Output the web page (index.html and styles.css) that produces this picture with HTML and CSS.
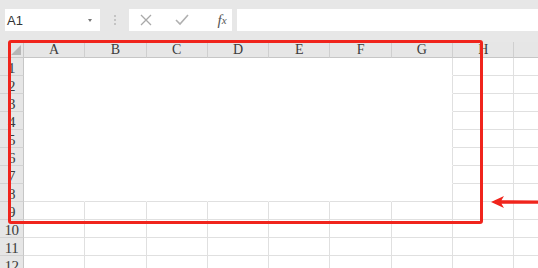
FILE: index.html
```html
<!DOCTYPE html>
<html lang="zh-CN">
<head>
  <meta charset="UTF-8" />
  <title>Sheet</title>
  <link rel="stylesheet" href="styles.css">
</head>
<body>
  <div class="toolbar">
    <div class="namebox">
      <span>A1</span>
      <span class="drop"></span>
    </div>
    <div class="sep"><i></i><i></i><i></i></div>
    <div class="fbtns">
      <span class="fbtn">
        <svg width="12" height="12" viewBox="0 0 12 12"><path d="M1 1L11 11M11 1L1 11" stroke="#a9a9a9" stroke-width="1.3" fill="none"/></svg>
      </span>
      <span class="fbtn">
        <svg width="14" height="12" viewBox="0 0 14 12"><path d="M1 6L5 10L13 1" stroke="#b0b0b0" stroke-width="1.6" fill="none"/></svg>
      </span>
      <span class="fbtn fx">f<sub>x</sub></span>
    </div>
    <div class="finput"></div>
  </div>

  <div class="sheet" id="sheet"></div>

  <div class="mark"></div>
  <svg class="arrow" width="48" height="14" viewBox="0 0 48 14">
    <path d="M1 7L14 1L11.5 5.2L48 5.4L48 8.8L11.5 8.8L14 13Z" fill="#f0241c"/>
  </svg>

<script>
  const cols = ["A", "B", "C", "D", "E", "F", "G", "H", ""];
  const sheet = document.getElementById("sheet");
  let html = '<div class="corner"><span class="tri"></span></div>';
  cols.forEach(c => { html += `<div class="colhead">${c}</div>`; });
  for (let r = 1; r <= 12; r++) {
    html += `<div class="rowhead">${r}</div>`;
    cols.forEach((c, i) => {
      let cls = "cell";
      if (r <= 8 && i < 7) {
        cls += i === 6 ? " blank keep-right" : " blank";
        if (r === 8) cls += " keep-bottom";
      }
      html += `<div class="${cls}"></div>`;
    });
  }
  sheet.innerHTML = html;
</script>
</body>
</html>
```

FILE: styles.css
```css
body {
  margin: 0;
  width: 538px;
  height: 268px;
  overflow: hidden;
  background: #e7e7e7;
  position: relative;
  font-family: "Liberation Serif", serif;
}
.toolbar {
  display: flex;
  height: 42px;
  padding-top: 9px;
  box-sizing: border-box;
}
.namebox {
  width: 95px;
  height: 22px;
  margin-left: 5px;
  background: #fff;
  display: flex;
  align-items: center;
  justify-content: space-between;
  padding: 0 8px 0 2px;
  box-sizing: border-box;
  font-family: "Liberation Sans", Arial, sans-serif;
  font-size: 13px;
  color: #333;
}
.drop {
  width: 0;
  height: 0;
  border-left: 2.5px solid transparent;
  border-right: 2.5px solid transparent;
  border-top: 3px solid #777;
}
.sep {
  width: 29px;
  display: flex;
  flex-direction: column;
  align-items: center;
  justify-content: center;
  gap: 2px;
  height: 22px;
}
.sep i {
  width: 2px;
  height: 2px;
  background: #c4c4c4;
}
.fbtns {
  width: 103px;
  height: 22px;
  background: #fff;
  display: flex;
  align-items: center;
  padding-left: 10px;
  box-sizing: border-box;
  gap: 22px;
}
.fbtn {
  display: flex;
  align-items: center;
  justify-content: center;
  width: 14px;
}
.fx {
  font-style: italic;
  font-size: 15px;
  color: #555;
  margin-left: 4px;
}
.fx sub {
  font-size: 11px;
  vertical-align: -1px;
}
.finput {
  flex: 1;
  height: 22px;
  margin-left: 5px;
  background: #fff;
}
.sheet {
  display: grid;
  grid-template-columns: 24px repeat(9, 61.3px);
  grid-template-rows: 16px repeat(12, 18px);
  background: #fff;
}
.corner, .colhead, .rowhead {
  background: #e6e6e6;
  box-sizing: border-box;
  color: #3c3c3c;
  font-size: 14px;
}
.corner {
  border-right: 1px solid #c8c8c8;
  border-bottom: 1px solid #c8c8c8;
  display: flex;
  align-items: flex-end;
  justify-content: flex-end;
  padding: 0 2px 2px 0;
}
.tri {
  width: 0;
  height: 0;
  border-left: 10px solid transparent;
  border-bottom: 10px solid #b6b6b6;
}
.colhead {
  border-right: 1px solid #cfcfcf;
  border-bottom: 1px solid #c6c6c6;
  text-align: center;
  line-height: 16px;
}
.rowhead {
  border-right: 1px solid #c6c6c6;
  border-bottom: 1px solid #d2d2d2;
  text-align: center;
  line-height: 20px;
  font-size: 15px;
  letter-spacing: -0.5px;
}
.cell {
  box-sizing: border-box;
  border-right: 1px solid #e0e0e0;
  border-bottom: 1px solid #e0e0e0;
}
.cell.blank {
  border-color: transparent;
}
.cell.keep-right {
  border-right-color: #e0e0e0;
}
.cell.keep-bottom {
  border-bottom-color: #e0e0e0;
}
.mark {
  position: absolute;
  left: 8px;
  top: 40px;
  width: 475px;
  height: 184px;
  box-sizing: border-box;
  border: 3px solid #f0241c;
  border-radius: 3px;
}
.arrow {
  position: absolute;
  left: 490px;
  top: 195px;
}
```
